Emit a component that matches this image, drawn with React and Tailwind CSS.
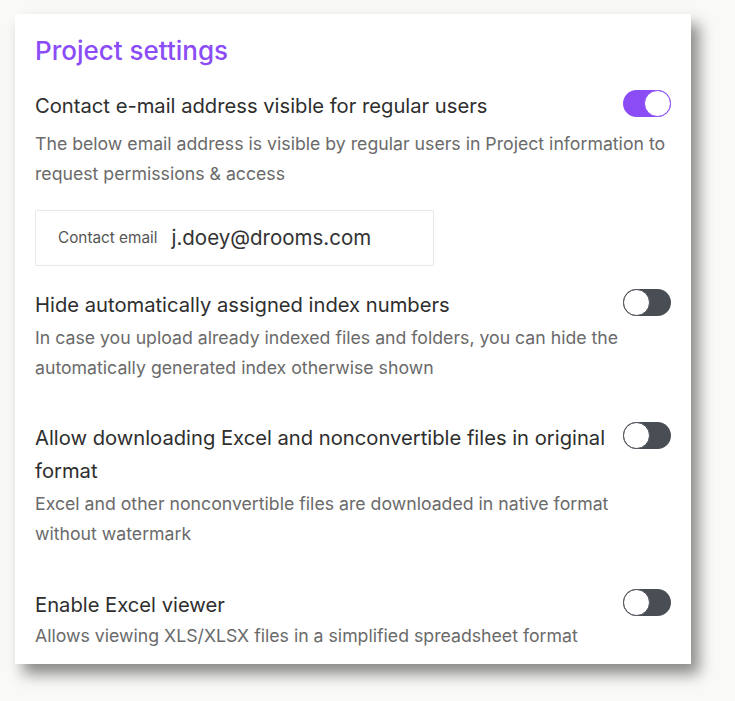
import { useState } from "react";

const SETTINGS = [
  {
    id: "hideIndex",
    title: "Hide automatically assigned index numbers",
    description:
      "In case you upload already indexed files and folders, you can hide the automatically generated index otherwise shown",
    on: false,
    gap: "mt-[2px]",
    spacing: "mt-[22px]",
  },
  {
    id: "originalFormat",
    title: "Allow downloading Excel and nonconvertible files in original format",
    description:
      "Excel and other nonconvertible files are downloaded in native format without watermark",
    on: false,
    gap: "mt-[2px]",
    spacing: "mt-[38px]",
  },
  {
    id: "excelViewer",
    title: "Enable Excel viewer",
    description: "Allows viewing XLS/XLSX files in a simplified spreadsheet format",
    on: false,
    gap: "mt-0",
    spacing: "mt-[39px]",
  },
];

function Toggle({ checked, onChange }) {
  return (
    <button
      type="button"
      onClick={onChange}
      className={`relative mt-[1px] flex h-[27px] w-[48px] shrink-0 items-center rounded-full ${
        checked ? "bg-[#8b4cf6]" : "bg-[#494d54]"
      }`}
    >
      <span
        className={`absolute top-0 h-[27px] w-[27px] rounded-full bg-white ${
          checked ? "right-0 border-[1.5px] border-[#8b4cf6]" : "left-0 border-[1.5px] border-[#494d54]"
        }`}
      />
    </button>
  );
}

function SettingRow({ title, description, checked, onToggle, className = "", gap = "mt-[2px]" }) {
  return (
    <div className={className}>
      <div className="flex items-start gap-[10px]">
        <h3 className="flex-1 text-[20.2px] leading-[33px] text-[#2e2e2e]">{title}</h3>
        <Toggle checked={checked} onChange={onToggle} />
      </div>
      <p className={`${gap} text-[17.7px] leading-[30px] text-[#6a6a6a]`}>{description}</p>
    </div>
  );
}

export default function App() {
  const [contactVisible, setContactVisible] = useState(true);
  const [flags, setFlags] = useState(
    Object.fromEntries(SETTINGS.map((s) => [s.id, s.on]))
  );

  const flip = (id) => setFlags((prev) => ({ ...prev, [id]: !prev[id] }));

  return (
    <div className="min-h-[701px] bg-[#f9f9f7] pl-[15px] pt-[14px] font-['Inter',sans-serif]">
      <section className="w-[676px] bg-white px-[20px] pb-[13px] pt-[21px] shadow-[8px_10px_14px_rgba(0,0,0,0.45)]">
        <h2 className="text-[26px] font-medium leading-[32px] text-[#8b4cf6]">Project settings</h2>

        {/* Contact e-mail */}
        <div className="mt-[22px]">
          <div className="flex items-start gap-[10px]">
            <h3 className="flex-1 text-[20.2px] leading-[33px] text-[#2e2e2e]">
              Contact e-mail address visible for regular users
            </h3>
            <Toggle checked={contactVisible} onChange={() => setContactVisible((v) => !v)} />
          </div>
          <p className="mt-[7px] text-[17.7px] leading-[30px] text-[#6a6a6a]">
            The below email address is visible by regular users in Project information to request
            permissions &amp; access
          </p>
          <div className="mt-[21px] flex h-[56px] w-[399px] items-center rounded-[2px] border border-[#e8e8e8] px-[22px]">
            <span className="text-[15.3px] text-[#555]">Contact email</span>
            <span className="ml-[14px] text-[20.5px] text-[#333]">j.doey@drooms.com</span>
          </div>
        </div>

        {SETTINGS.map((s) => (
          <SettingRow
            key={s.id}
            className={s.spacing}
            gap={s.gap}
            title={s.title}
            description={s.description}
            checked={flags[s.id]}
            onToggle={() => flip(s.id)}
          />
        ))}
      </section>
    </div>
  );
}
